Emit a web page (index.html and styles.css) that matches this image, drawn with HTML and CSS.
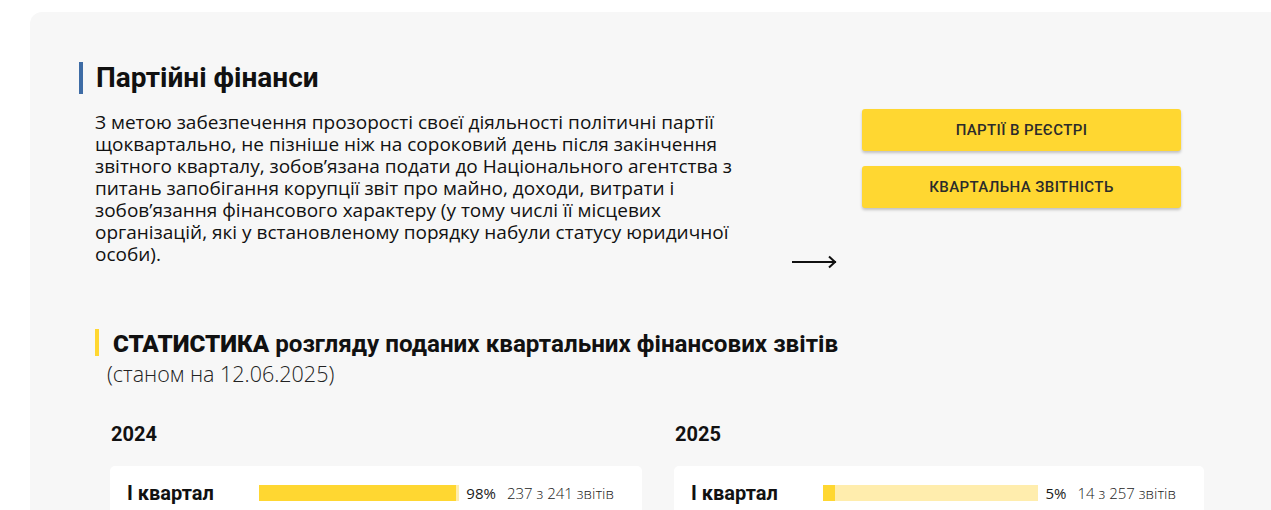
FILE: index.html
```html
<!DOCTYPE html>
<html lang="uk">
<head>
    <meta charset="UTF-8">
    <meta name="viewport" content="width=device-width, initial-scale=1.0">
    <title>Партійні фінанси</title>
    <link rel="stylesheet" href="styles.css">
</head>
<body>

    <div class="page">
        <section class="panel">

            <div class="intro">
                <div class="intro-main">
                    <h1 class="section-title">Партійні фінанси</h1>
                    <p class="intro-text">З метою забезпечення прозорості своєї діяльності політичні партії щоквартально, не пізніше ніж на сороковий день після закінчення звітного кварталу, зобов’язана подати до Національного агентства з питань запобігання корупції звіт про майно, доходи, витрати і зобов’язання фінансового характеру (у тому числі її місцевих організацій, які у встановленому порядку набули статусу юридичної особи).</p>
                </div>

                <div class="intro-arrow">
                    <svg viewBox="0 0 46 14" width="46" height="14" fill="none" stroke="#111" stroke-width="2">
                        <path d="M0 7h44"/>
                        <path d="M37 1.5l6 5.5-6 5.5"/>
                    </svg>
                </div>

                <div class="intro-links">
                    <a class="btn-yellow" href="#">Партії в реєстрі</a>
                    <a class="btn-yellow" href="#">Квартальна звітність</a>
                </div>
            </div>

            <div class="stats">
                <h2 class="stats-title"><b>СТАТИСТИКА</b> розгляду поданих квартальних фінансових звітів</h2>
                <div class="stats-date">(станом на 12.06.2025)</div>

                <div class="years">
                    <div class="year">
                        <h3 class="year-title">2024</h3>
                        <div class="year-card">
                            <div class="quarter">
                                <span class="quarter-name">І квартал</span>
                                <span class="quarter-bar"><span class="quarter-fill" style="width: 98.3%"></span></span>
                                <span class="quarter-pct">98%</span>
                                <span class="quarter-count">237 з 241 звітів</span>
                            </div>
                        </div>
                    </div>

                    <div class="year">
                        <h3 class="year-title">2025</h3>
                        <div class="year-card">
                            <div class="quarter">
                                <span class="quarter-name">І квартал</span>
                                <span class="quarter-bar"><span class="quarter-fill" style="width: 5.4%"></span></span>
                                <span class="quarter-pct">5%</span>
                                <span class="quarter-count">14 з 257 звітів</span>
                            </div>
                        </div>
                    </div>
                </div>
            </div>

        </section>
    </div>

</body>
</html>
```

FILE: styles.css
```css
/* base */
html, body {
    margin: 0;
    padding: 0;
    background: #fff;
    color: #111;
    font-family: "Open Sans", "Liberation Sans", sans-serif;
    overflow: hidden;
}

.page {
    padding: 12px 0 0 30px;
}

/* grey rounded panel, runs past the right edge */
.panel {
    background: #f7f7f7;
    border-radius: 12px 0 0 0;
    margin-right: -40px;
    padding: 50px 0 40px 49px;
    min-height: 600px;
}

/* intro: heading + text, arrow, buttons */
.intro {
    display: flex;
}

.intro-main {
    width: 680px;
}

.section-title {
    margin: 0;
    border-left: 4px solid #3e6ca5;
    padding-left: 13px;
    font-family: Roboto, sans-serif;
    font-weight: 700;
    font-size: 28px;
    line-height: 32px;
    color: #111;
}

.intro-text {
    margin: 17px 0 0 16px;
    font-size: 19px;
    line-height: 22px;
    color: #111;
}

.intro-arrow {
    align-self: flex-end;
    margin: 0 0 -4px 33px;
    line-height: 0;
}

.intro-links {
    display: flex;
    flex-direction: column;
    gap: 15px;
    width: 319px;
    margin-left: 24px;
    padding-top: 47px;
}

.btn-yellow {
    display: flex;
    align-items: center;
    justify-content: center;
    height: 42px;
    background: #ffd731;
    border-radius: 3px;
    box-shadow: 0 2px 3px rgba(0, 0, 0, 0.22);
    color: #2b2b2b;
    text-decoration: none;
    text-transform: uppercase;
    font-family: Roboto, sans-serif;
    font-weight: 500;
    font-size: 15px;
    letter-spacing: 0.4px;
}

/* statistics block */
.stats {
    margin: 64px 0 0 16px;
}

.stats-title {
    margin: 0;
    border-left: 4px solid #ffd731;
    padding: 2px 0 0 14px;
    height: 25px;
    font-family: Roboto, sans-serif;
    font-weight: 700;
    font-size: 24.2px;
    line-height: 27px;
    color: #111;
}

.stats-date {
    padding-left: 12px;
    margin-top: 5px;
    font-size: 21.5px;
    line-height: 26px;
    font-weight: 300;
    color: #222;
}

.years {
    display: grid;
    grid-template-columns: 532px 530px;
    gap: 32px;
    margin: 34px 0 0 15px;
}

.year-title {
    margin: 0 0 19px 1px;
    font-family: Roboto, sans-serif;
    font-weight: 700;
    font-size: 20px;
    line-height: 26px;
}

.year-card {
    background: #fff;
    border-radius: 5px;
    padding: 17px 28px 16px 17px;
}

.quarter {
    display: flex;
    align-items: center;
    height: 20px;
}

.quarter-name {
    width: 132px;
    flex-shrink: 0;
    font-family: Roboto, sans-serif;
    font-weight: 700;
    font-size: 20px;
}

.quarter-bar {
    flex: 1;
    height: 16px;
    background: #ffedad;
}

.quarter-fill {
    display: block;
    height: 100%;
    background: #ffd731;
}

.quarter-pct,
.quarter-count {
    font-size: 15px;
    color: #1a1a1a;
}

.quarter-pct {
    margin-left: 7px;
}

.quarter-count {
    margin-left: 11px;
    font-weight: 300;
}
```
